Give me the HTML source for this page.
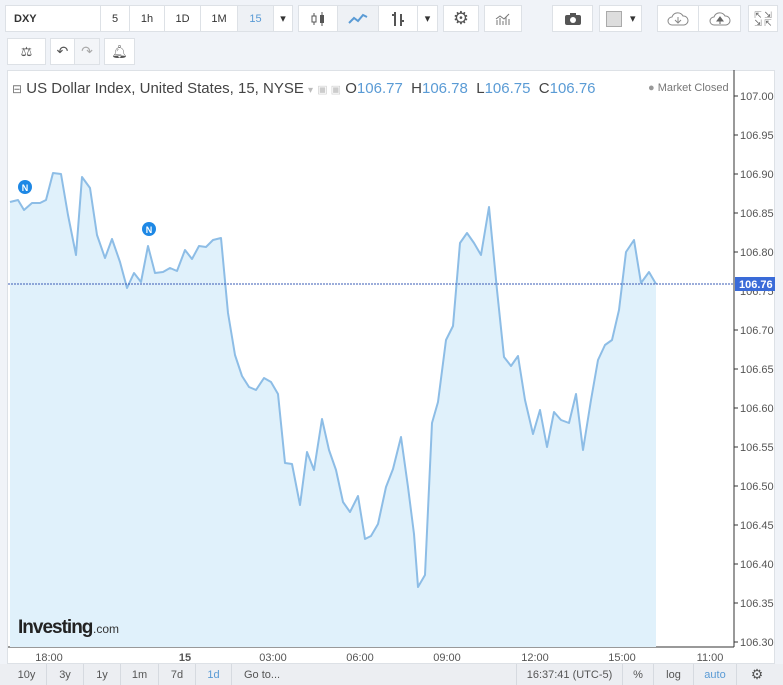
<!DOCTYPE html><html><head><meta charset="utf-8"><style>
*{box-sizing:border-box;margin:0;padding:0}
body{width:783px;height:685px;background:#f0f3f8;font-family:"Liberation Sans",sans-serif;position:relative;overflow:hidden;color:#444}
.b{position:absolute;background:#fff;border:1px solid #dde1e6;font-size:11px;display:flex;align-items:center;justify-content:center;color:#333}
.chart{position:absolute;left:7px;top:70px;width:768px;height:594px;background:#fff;border:1px solid #dde1e6}
.bot{position:absolute;top:664px;height:21px;font-size:11px;color:#555;display:flex;align-items:center;justify-content:center;border-right:1px solid #d6dae0}
</style></head><body>
<div class="b" style="left:5px;top:5px;width:96px;height:27px;justify-content:flex-start;padding-left:8px;font-weight:bold;color:#333">DXY</div>
<div class="b" style="left:100px;top:5px;width:30px;height:27px">5</div>
<div class="b" style="left:129px;top:5px;width:36px;height:27px">1h</div>
<div class="b" style="left:164px;top:5px;width:37px;height:27px">1D</div>
<div class="b" style="left:200px;top:5px;width:38px;height:27px">1M</div>
<div class="b" style="left:237px;top:5px;width:37px;height:27px;background:#eef1f5;color:#5a9bd5">15</div>
<div class="b" style="left:273px;top:5px;width:20px;height:27px">▾</div>
<div class="b" style="left:298px;top:5px;width:40px;height:27px"><svg width="14" height="16"><path d="M3 2v12M11 1v14" stroke="#555"/><rect x="1" y="5" width="4" height="6" fill="#fff" stroke="#555"/><rect x="9" y="4" width="4" height="8" fill="#555"/></svg></div>
<div class="b" style="left:337px;top:5px;width:42px;height:27px;background:#eef1f5"><svg width="20" height="12"><path d="M1 10l5-5 4 3 5-6 4 2" stroke="#5a9bd5" stroke-width="2" fill="none"/></svg></div>
<div class="b" style="left:378px;top:5px;width:40px;height:27px"><svg width="14" height="16"><path d="M4 1v14M1 4h3M10 3v12M10 10h3" stroke="#555" stroke-width="2"/></svg></div>
<div class="b" style="left:417px;top:5px;width:21px;height:27px">▾</div>
<div class="b" style="left:443px;top:5px;width:36px;height:27px;font-size:18px;color:#555">⚙</div>
<div class="b" style="left:484px;top:5px;width:38px;height:27px"><svg width="16" height="12"><path d="M2 12V7M5 12V5M8 12V8M11 12V4M14 12V6M1 6l4-3 4 3 5-5" stroke="#777" fill="none"/></svg></div>
<div class="b" style="left:552px;top:5px;width:41px;height:27px"><svg width="18" height="14"><rect x="1" y="3" width="16" height="10" rx="2" fill="#555"/><rect x="6" y="1" width="6" height="3" fill="#555"/><circle cx="9" cy="8" r="3" fill="#fff"/></svg></div>
<div class="b" style="left:599px;top:5px;width:43px;height:27px;justify-content:flex-start;padding-left:6px"><span style="width:16px;height:16px;background:#ddd;border:1px solid #aaa;display:inline-block"></span><span style="margin-left:8px">▾</span></div>
<div class="b" style="left:657px;top:5px;width:42px;height:27px"><svg width="22" height="16"><path d="M5 14a4 4 0 010-8 6 6 0 0111-1 4.5 4.5 0 011 9z" fill="none" stroke="#888"/><path d="M11 6v6M8 9l3 3 3-3" stroke="#888" fill="none"/></svg></div>
<div class="b" style="left:698px;top:5px;width:43px;height:27px"><svg width="22" height="16"><path d="M5 14a4 4 0 010-8 6 6 0 0111-1 4.5 4.5 0 011 9z" fill="none" stroke="#888"/><path d="M11 13V7M8 10l3-4 3 4z" stroke="#666" fill="#666"/></svg></div>
<div class="b" style="left:748px;top:5px;width:30px;height:27px;font-size:9px;color:#666;line-height:8px;text-align:center">⇱ ⇲<br>⇲ ⇱</div>
<div class="b" style="left:7px;top:38px;width:39px;height:27px;font-size:13px;color:#555">⚖</div>
<div class="b" style="left:50px;top:38px;width:25px;height:27px;font-size:14px;color:#555">↶</div>
<div class="b" style="left:74px;top:38px;width:26px;height:27px;font-size:14px;color:#aaa;background:#f3f5f8">↷</div>
<div class="b" style="left:104px;top:38px;width:31px;height:27px;font-size:13px;color:#555">🔔︎</div>
<div class="chart"></div>
<svg style="position:absolute;left:0;top:0" width="783" height="685">
<line x1="734" y1="70" x2="734" y2="647" stroke="#333"/>
<line x1="8" y1="647" x2="734" y2="647" stroke="#333"/>
<polygon fill="#e0f1fb" points="10,647 10,202 18,200 24,210 32,203 40,203 46,200 53,173 61,174 68,215 76,255 82,177 90,188 97,235 105,258 112,239 120,262 127,288 134,273 141,282 148,246 155,273 163,272 170,268 177,271 185,250 192,259 199,246 206,247 213,240 221,238 228,313 235,355 242,376 249,387 256,390 264,378 271,382 278,394 285,463 292,464 300,505 307,452 314,470 322,419 329,450 336,470 343,502 350,512 358,496 365,539 371,536 378,524 386,487 393,469 401,437 408,487 414,534 418,587 425,575 432,423 438,402 446,340 453,326 460,243 467,233 474,243 481,255 489,207 497,290 504,357 511,366 518,356 525,400 533,434 540,410 547,447 554,412 561,420 569,423 576,394 583,450 591,400 598,360 605,345 612,340 619,310 626,252 634,240 641,283 649,272 656,284 656,647"/>
<polyline fill="none" stroke="#8dbde6" stroke-width="2" stroke-linejoin="round" points="10,202 18,200 24,210 32,203 40,203 46,200 53,173 61,174 68,215 76,255 82,177 90,188 97,235 105,258 112,239 120,262 127,288 134,273 141,282 148,246 155,273 163,272 170,268 177,271 185,250 192,259 199,246 206,247 213,240 221,238 228,313 235,355 242,376 249,387 256,390 264,378 271,382 278,394 285,463 292,464 300,505 307,452 314,470 322,419 329,450 336,470 343,502 350,512 358,496 365,539 371,536 378,524 386,487 393,469 401,437 408,487 414,534 418,587 425,575 432,423 438,402 446,340 453,326 460,243 467,233 474,243 481,255 489,207 497,290 504,357 511,366 518,356 525,400 533,434 540,410 547,447 554,412 561,420 569,423 576,394 583,450 591,400 598,360 605,345 612,340 619,310 626,252 634,240 641,283 649,272 656,284"/>
<line x1="8" y1="284" x2="734" y2="284" stroke="#3a5bb5" stroke-dasharray="2,1"/>
<circle cx="25" cy="187" r="7" fill="#1e88e5"/><text x="25" y="191" font-size="9" font-weight="bold" fill="#fff" text-anchor="middle" font-family="Liberation Sans">N</text>
<circle cx="149" cy="229" r="7" fill="#1e88e5"/><text x="149" y="233" font-size="9" font-weight="bold" fill="#fff" text-anchor="middle" font-family="Liberation Sans">N</text>
<g stroke="#333"><line x1="734" y1="96" x2="738" y2="96"/><line x1="734" y1="135" x2="738" y2="135"/><line x1="734" y1="174" x2="738" y2="174"/><line x1="734" y1="213" x2="738" y2="213"/><line x1="734" y1="252" x2="738" y2="252"/><line x1="734" y1="330" x2="738" y2="330"/><line x1="734" y1="369" x2="738" y2="369"/><line x1="734" y1="408" x2="738" y2="408"/><line x1="734" y1="447" x2="738" y2="447"/><line x1="734" y1="486" x2="738" y2="486"/><line x1="734" y1="525" x2="738" y2="525"/><line x1="734" y1="564" x2="738" y2="564"/><line x1="734" y1="603" x2="738" y2="603"/><line x1="734" y1="642" x2="738" y2="642"/></g>
<g font-family="Liberation Sans" font-size="11" fill="#555"><text x="740" y="100">107.00</text><text x="740" y="139">106.95</text><text x="740" y="178">106.90</text><text x="740" y="217">106.85</text><text x="740" y="256">106.80</text><text x="740" y="295">106.75</text><text x="740" y="334">106.70</text><text x="740" y="373">106.65</text><text x="740" y="412">106.60</text><text x="740" y="451">106.55</text><text x="740" y="490">106.50</text><text x="740" y="529">106.45</text><text x="740" y="568">106.40</text><text x="740" y="607">106.35</text><text x="740" y="646">106.30</text></g>
<rect x="735" y="277" width="40" height="14" fill="#3a6bd8"/><text x="739" y="288" font-family="Liberation Sans" font-size="11" fill="#fff" font-weight="bold">106.76</text>
<g font-family="Liberation Sans" font-size="11" fill="#555" text-anchor="middle"><text x="49" y="661">18:00</text><text x="185" y="661" font-weight="bold">15</text><text x="273" y="661">03:00</text><text x="360" y="661">06:00</text><text x="447" y="661">09:00</text><text x="535" y="661">12:00</text><text x="622" y="661">15:00</text><text x="710" y="661">11:00</text></g>
<text x="18" y="633" font-family="Liberation Sans" font-size="19" font-weight="bold" fill="#222" letter-spacing="-1">Investing</text><text x="93" y="633" font-family="Liberation Sans" font-size="12" fill="#333">.com</text>
</svg>
<div style="position:absolute;left:12px;top:80px;font-size:15px;color:#444;white-space:nowrap"><span style="font-size:12px;color:#777">⊟</span> US Dollar Index, United States, 15, NYSE <span style="color:#bbb;font-size:10px">▾</span> <span style="color:#ccc;font-size:11px">▣ ▣</span> O<span style="color:#5a9bd5">106.77</span>&nbsp; H<span style="color:#5a9bd5">106.78</span>&nbsp; L<span style="color:#5a9bd5">106.75</span>&nbsp; C<span style="color:#5a9bd5">106.76</span></div>
<div style="position:absolute;left:648px;top:82px;font-size:11px;color:#777"><span style="color:#999">●</span> Market Closed</div>
<div style="position:absolute;left:0;top:664px;width:783px;height:21px;background:#eceef2"></div>
<div class="bot" style="left:7px;width:40px">10y</div><div class="bot" style="left:47px;width:37px">3y</div><div class="bot" style="left:84px;width:37px">1y</div><div class="bot" style="left:121px;width:38px">1m</div><div class="bot" style="left:159px;width:37px">7d</div><div class="bot" style="left:196px;width:36px;color:#5a9bd5">1d</div><div class="bot" style="left:232px;width:284px;justify-content:flex-start;padding-left:12px;border-right:none">Go to...</div>
<div class="bot" style="left:516px;width:107px;border-left:1px solid #d6dae0">16:37:41 (UTC-5)</div><div class="bot" style="left:623px;width:31px">%</div><div class="bot" style="left:654px;width:40px">log</div><div class="bot" style="left:694px;width:43px;color:#5a9bd5">auto</div><div class="bot" style="left:737px;width:40px;font-size:14px;border:none">⚙</div>
</body></html>
